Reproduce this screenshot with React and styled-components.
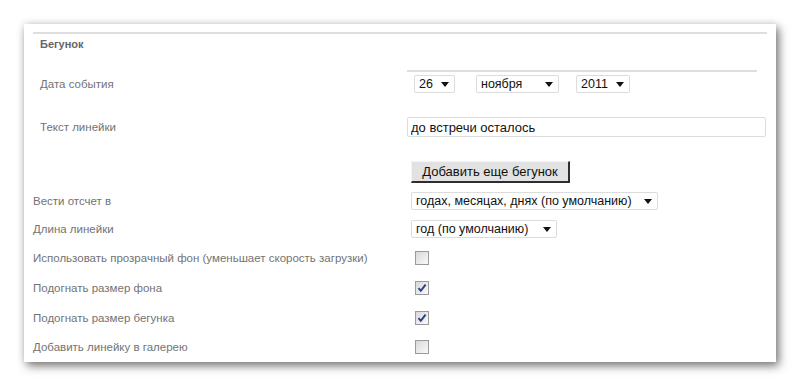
import styled, { createGlobalStyle } from "styled-components";

const Global = createGlobalStyle`
    body{
        margin: 0;
        background: #fff;
        font-family: "Liberation Sans", Arial, sans-serif;
    }
`

export default function App(){
    return(
        <Page>
            <Global/>
            <Card>
                <Rule/>
                <Fieldset>
                    <Legend>Бегунок</Legend>
                    <Row cols={367} top={16} h={2}>
                        <span></span>
                        <Divider/>
                    </Row>
                    <Row cols={367} top={3} h={18}>
                        <Label>Дата события</Label>
                        <DateRow>
                            <Dropdown width={41} value="26"/>
                            <Dropdown width={83} value="ноября" gap={21}/>
                            <Dropdown width={54} value="2011" gap={17}/>
                        </DateRow>
                    </Row>
                    <Row cols={367} top={24} h={20}>
                        <Label>Текст линейки</Label>
                        <TextField defaultValue="до встречи осталось"/>
                    </Row>
                    <Row cols={367} top={24} h={22}>
                        <span></span>
                        <AddButton>Добавить еще бегунок</AddButton>
                    </Row>
                </Fieldset>
                <Row cols={378} top={4} h={28}>
                    <Label>Вести отсчет в</Label>
                    <Dropdown width={247} value="годах, месяцах, днях (по умолчанию)"/>
                </Row>
                <Row cols={378} h={28}>
                    <Label>Длина линейки</Label>
                    <Dropdown width={146} value="год (по умолчанию)"/>
                </Row>
                <CheckRow label="Использовать прозрачный фон (уменьшает скорость загрузки)"/>
                <CheckRow label="Подогнать размер фона" checked/>
                <CheckRow label="Подогнать размер бегунка" checked/>
                <CheckRow label="Добавить линейку в галерею" h={28}/>
            </Card>
        </Page>
    )
}

function Dropdown({width, value, gap}){
    return(
        <SelectBox width={width} gap={gap}>
            <span>{value}</span>
            <Arrow/>
        </SelectBox>
    )
}

function CheckRow({label, checked, h = 30}){
    return(
        <Row cols={378} h={h}>
            <Label>{label}</Label>
            <CheckCell>
                <Box>
                    {checked && (
                        <svg width="10" height="10" viewBox="0 0 10 10">
                            <path d="M1.5 5.2 L3.8 7.8 L8.6 1.6" fill="none" stroke="#2b3f8f" strokeWidth="2"/>
                        </svg>
                    )}
                </Box>
            </CheckCell>
        </Row>
    )
}

const Page = styled.div`
    padding: 24px;
    height: 386px;
    box-sizing: border-box;
`

const Card = styled.div`
    background: #fff;
    height: 338px;
    box-sizing: border-box;
    padding: 8px 9px 0 9px;
    box-shadow: 3px 4px 9px rgba(0,0,0,0.5), 0 0 8px rgba(0,0,0,0.12);
`

const Rule = styled.div`
    height: 2px;
    background: #dedede;
`

const Fieldset = styled.div`
    padding: 0 0 0 7px;
`

const Legend = styled.div`
    font-size: 11px;
    font-weight: bold;
    color: #666;
    line-height: 20px;
    height: 20px;
`

const Row = styled.div`
    display: grid;
    grid-template-columns: ${p => p.cols}px 1fr;
    align-items: center;
    height: ${p => p.h}px;
    margin-top: ${p => p.top || 0}px;
`

const Divider = styled.div`
    width: 350px;
    height: 2px;
    background: #dedede;
`

const Label = styled.div`
    font-size: 11.5px;
    color: #737373;
    white-space: nowrap;
`

const DateRow = styled.div`
    display: flex;
    padding-left: 7px;
`

const SelectBox = styled.div`
    width: ${p => p.width}px;
    height: 18px;
    margin-left: ${p => p.gap || 0}px;
    box-sizing: border-box;
    border: 1px solid #dcdcdc;
    border-radius: 2px;
    background: #fff;
    display: flex;
    align-items: center;
    justify-content: space-between;
    padding: 0 5px 0 4px;
    font-size: 12.5px;
    color: #111;
    white-space: nowrap;
`

const Arrow = styled.span`
    width: 0;
    height: 0;
    border-left: 4px solid transparent;
    border-right: 4px solid transparent;
    border-top: 5px solid #111;
`

const TextField = styled.input`
    width: 359px;
    height: 20px;
    box-sizing: border-box;
    border: 1px solid #dcdcdc;
    border-radius: 2px;
    padding: 0 3px;
    font-family: "Liberation Sans", Arial, sans-serif;
    font-size: 13px;
    color: #111;
    outline: none;
`

const AddButton = styled.button`
    margin-left: 4px;
    width: 159px;
    height: 22px;
    box-sizing: border-box;
    background: #e2e2e2;
    border-style: solid;
    border-width: 1px 2px 2px 1px;
    border-color: #f4f4f4 #2e2e2e #2e2e2e #f4f4f4;
    font-family: "Liberation Sans", Arial, sans-serif;
    font-size: 13px;
    color: #111;
    padding: 0;
`

const CheckCell = styled.div`
    display: flex;
    align-items: center;
    padding-left: 4px;
`

const Box = styled.div`
    width: 14px;
    height: 14px;
    box-sizing: border-box;
    border: 1px solid #9a9a9a;
    background: linear-gradient(135deg, #d8d8d8, #fafafa);
    display: flex;
    align-items: center;
    justify-content: center;
`
